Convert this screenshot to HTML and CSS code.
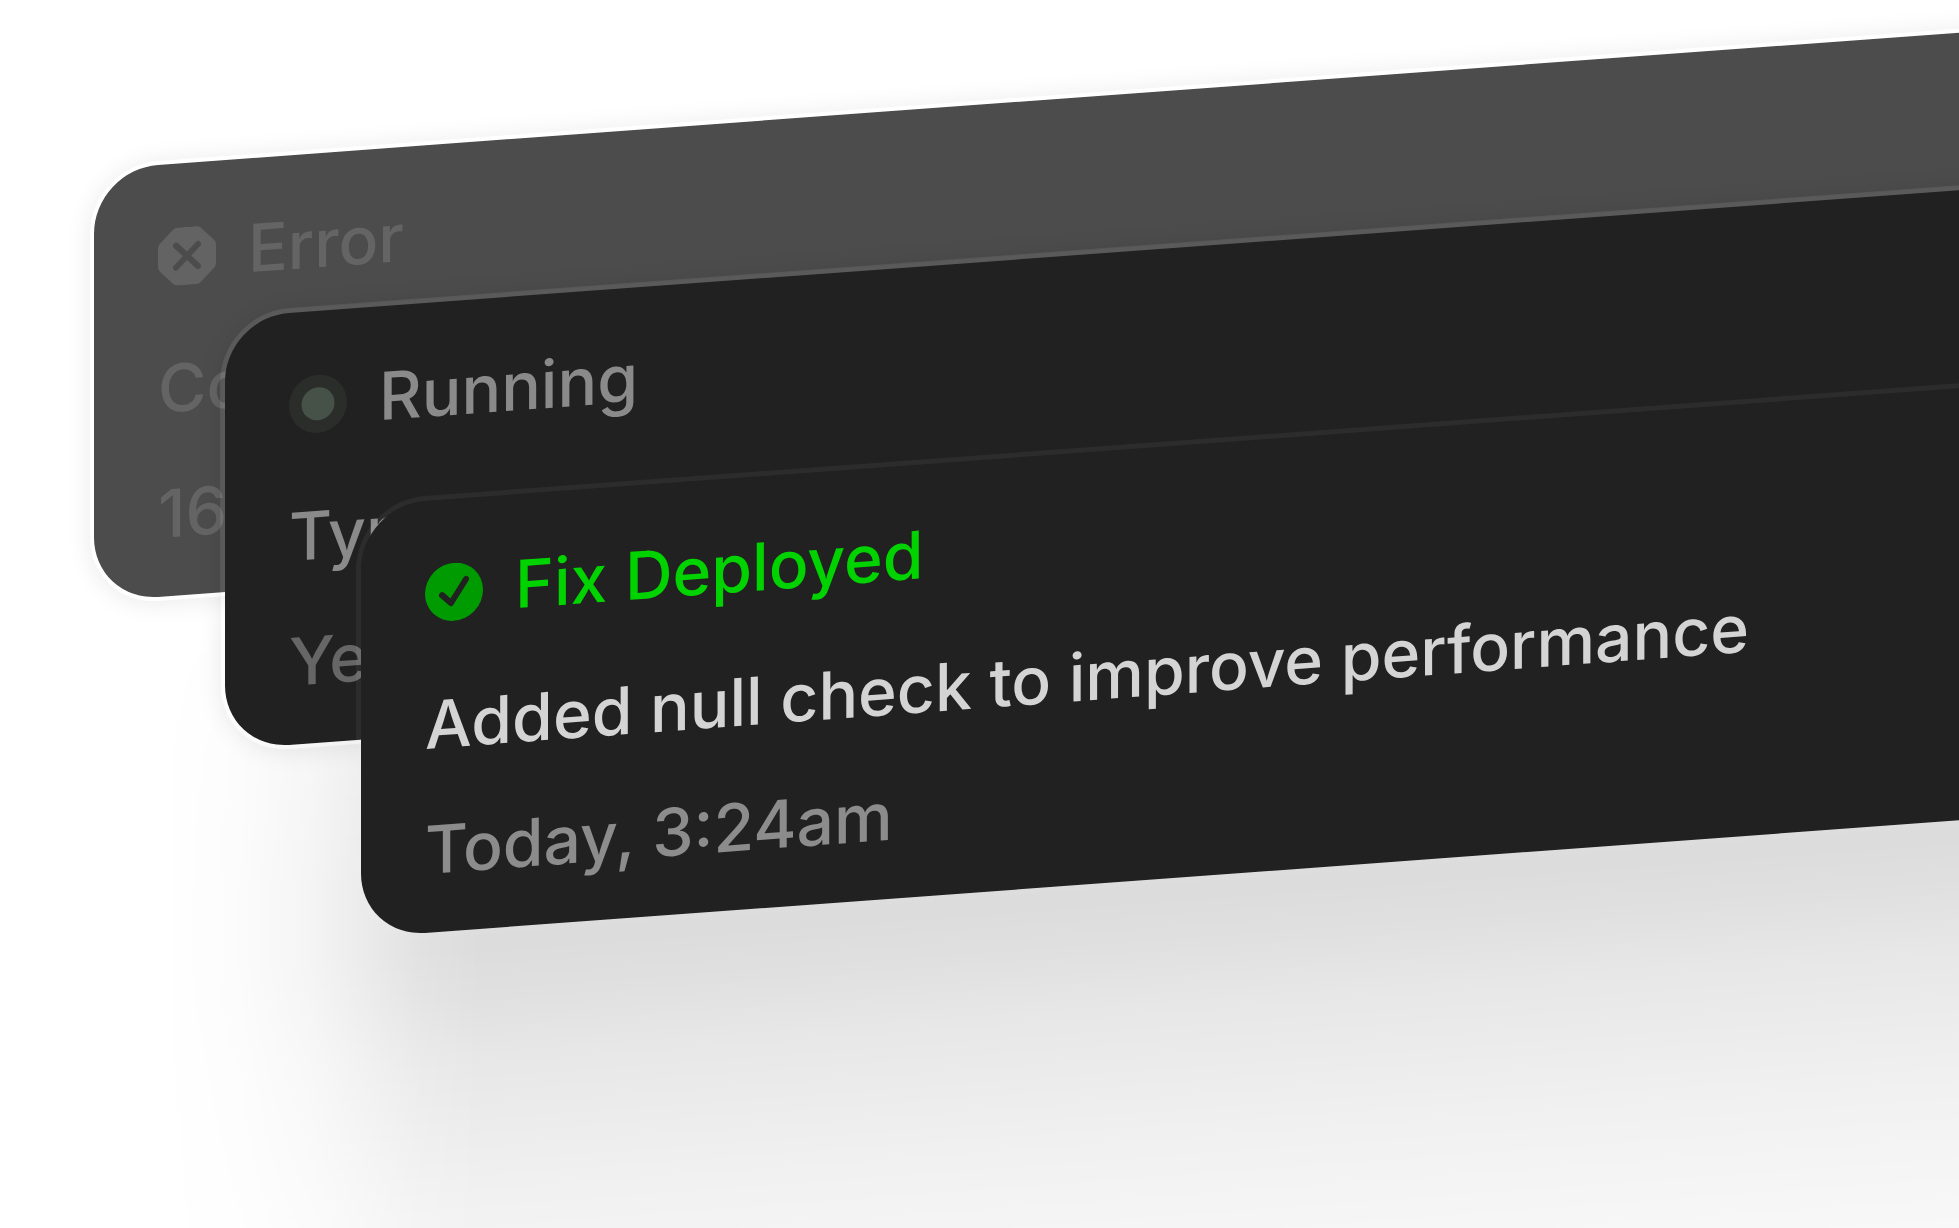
FILE: index.html
```
<!DOCTYPE html>
<html lang="en">
	<head>
		<meta charset="UTF-8" />
		<meta name="viewport" content="width=device-width, initial-scale=1.0" />
		<title>Deploy status</title>
		<link rel="stylesheet" href="styles.css">
	</head>
	<body>
		<main class="stack">
			<article class="card card-error">
				<h2 class="card-title">
					<svg class="icon" viewBox="0 0 58 58" aria-hidden="true">
						<path class="icon-fill" d="M20 0H38Q41 0 43 2L56 15Q58 17 58 20V38Q58 41 56 43L43 56Q41 58 38 58H20Q17 58 15 56L2 43Q0 41 0 38V20Q0 17 2 15L15 2Q17 0 20 0Z" />
						<path class="icon-line" d="M18 18L40 40M40 18L18 40" />
					</svg>
					Error
				</h2>
				<p class="card-text">Code</p>
				<p class="card-time">16m</p>
			</article>
			<article class="card card-running">
				<h2 class="card-title">
					<svg class="icon" viewBox="0 0 58 58" aria-hidden="true">
						<circle class="icon-halo" cx="29" cy="29" r="29" />
						<circle class="icon-fill" cx="29" cy="29" r="16.500" />
					</svg>
					Running
				</h2>
				<p class="card-text">Type</p>
				<p class="card-time">Yesterday</p>
			</article>
			<article class="card card-fixed">
				<h2 class="card-title">
					<svg class="icon" viewBox="0 0 58 58" aria-hidden="true">
						<circle class="icon-fill" cx="29" cy="29" r="29" />
						<path class="icon-line" d="M17 31.500L26 40L41 17" />
					</svg>
					Fix Deployed
				</h2>
				<p class="card-text">Added null check to improve performance</p>
				<p class="card-time">Today, 3:24am</p>
			</article>
		</main>
	</body>
</html>
```
FILE: styles.css
```
* {
	box-sizing: border-box;
	margin: 0;
	padding: 0;
}
body {
	font-family: Inter, "Liberation Sans", sans-serif;
	background-color: #fff;
	overflow: hidden;
}
.stack {
	display: grid;
	align-items: start;
	min-height: 100vh;
	overflow: hidden;
}
/* soft shadow falling below the front card */
.stack::before {
	content: "";
	grid-area: 1 / 1;
	align-self: stretch;
	margin: 600px -200px -200px 160px;
	background: linear-gradient(
		rgba(0, 0, 0, 0) 0,
		rgba(0, 0, 0, 0.11) 160px,
		rgba(0, 0, 0, 0.137) 300px,
		rgba(0, 0, 0, 0.137) 370px,
		rgba(0, 0, 0, 0.12) 420px,
		rgba(0, 0, 0, 0.096) 480px,
		rgba(0, 0, 0, 0.075) 550px,
		rgba(0, 0, 0, 0.055) 620px,
		rgba(0, 0, 0, 0.038) 700px,
		rgba(0, 0, 0, 0.02) 800px
	);
	-webkit-mask-image: linear-gradient(to right, transparent, rgba(0, 0, 0, 0.1) 80px, rgba(0, 0, 0, 0.3) 150px, rgba(0, 0, 0, 0.55) 200px, rgba(0, 0, 0, 0.85) 260px, #000 320px);
	mask-image: linear-gradient(to right, transparent, rgba(0, 0, 0, 0.1) 80px, rgba(0, 0, 0, 0.3) 150px, rgba(0, 0, 0, 0.55) 200px, rgba(0, 0, 0, 0.85) 260px, #000 320px);
	transform: skewY(-4.2deg);
	transform-origin: 0 0;
}
/* all cards share one cell, the margins fan them out */
.card {
	grid-area: 1 / 1;
	padding: 50px 64px 43px;
	margin-right: -200px;
	background-color: #212121;
	background-clip: padding-box;
	border: 5px solid rgba(255, 255, 255, 0.08);
	border-radius: 69px;
	transform: skewY(-4.2deg);
	transform-origin: 0 0;
	box-shadow: 0 2px 24px rgba(0, 0, 0, 0.08);
	font-size: 66px;
	font-weight: 500;
	line-height: 80px;
	white-space: nowrap;
}
.card-title {
	display: flex;
	align-items: center;
	gap: 32px;
	font-size: 66px;
	font-weight: 500;
}
.card-text {
	margin-top: 54px;
}
.card-time {
	margin-top: 45px;
}
.icon {
	flex: none;
	width: 58px;
	height: 58px;
	margin-top: 5px;
}
.icon-line {
	fill: none;
	stroke: #212121;
	stroke-width: 6;
	stroke-linecap: round;
	stroke-linejoin: round;
}
.card-error {
	margin-top: 165px;
	margin-left: 89px;
	background-color: #4c4c4c;
	color: #646464;
}
.card-error .icon-fill {
	fill: #636363;
}
.card-error .icon-line {
	stroke: #4c4c4c;
}
.card-running {
	margin-top: 313px;
	margin-left: 220px;
	color: #8a8a8a;
}
.card-running .icon-fill {
	fill: #465248;
}
.card-running .icon-halo {
	fill: #2b2d2b;
}
.card-running .card-time {
	color: #666;
}
.card-fixed {
	margin-top: 501px;
	margin-left: 356px;
	border-color: rgba(255, 255, 255, 0.05);
	box-shadow: none;
}
.card-fixed .card-title {
	color: #00d300;
}
.card-fixed .icon-fill {
	fill: #009b00;
}
.card-fixed .card-text {
	color: #d4d4d4;
}
.card-fixed .card-time {
	color: #8c8c8c;
}
```
